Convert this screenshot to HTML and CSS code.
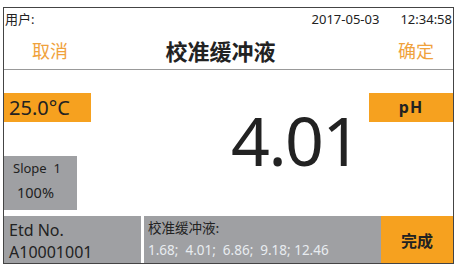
FILE: index.html
```html
<!DOCTYPE html>
<html>
<head>
<meta charset="utf-8">
<link rel="stylesheet" href="styles.css">
</head>
<body>
<div class="frame">
  <div class="status">
    <span class="user">用户:</span>
    <span class="date">2017-05-03</span>
    <span class="time">12:34:58</span>
  </div>
  <div class="header">
    <span class="action">取消</span>
    <span class="title">校准缓冲液</span>
    <span class="action">确定</span>
  </div>
  <div class="main">
    <div class="left">
      <div class="temp">25.0°C</div>
      <div class="slope">
        <div>Slope&nbsp;&nbsp;1</div>
        <div class="pct">100%</div>
      </div>
    </div>
    <div class="center"><span class="value">4.01</span></div>
    <div class="right">
      <div class="unit">pH</div>
    </div>
  </div>
  <div class="bottom">
    <div class="etd">
      <div>Etd No.</div>
      <div>A10001001</div>
    </div>
    <div class="buffers">
      <div class="blabel">校准缓冲液:</div>
      <div class="bvals">1.68;&nbsp; 4.01;&nbsp; 6.86;&nbsp; 9.18; 12.46</div>
    </div>
    <div class="done">完成</div>
  </div>
</div>
</body>
</html>
```
FILE: styles.css
```css
* { box-sizing: border-box; }
html, body { margin: 0; padding: 0; background: #fff; }
body {
  width: 460px;
  height: 272px;
  font-family: "Noto Sans", "Noto Sans CJK SC", sans-serif;
  color: #222;
}
.frame {
  margin: 7px 0 0 3px;
  width: 451px;
  height: 257px;
  border: 1px solid #444;
  display: flex;
  flex-direction: column;
}
.status {
  height: 20px;
  display: flex;
  align-items: center;
  font-size: 13px;
  line-height: 1;
  padding: 2px 1px 0 1px;
}
.user { flex: 1; }
.date { margin-right: 21px; }
.header {
  height: 42px;
  border-bottom: 1px solid #999;
  display: flex;
  align-items: center;
  justify-content: space-between;
  padding: 3px 19px 0 28px;
  font-family: "Noto Sans CJK SC", sans-serif;
}
.action { color: #F0A23C; font-size: 18px; }
.title { font-weight: bold; font-size: 22px; color: #222; margin-right: 25px; }
.main {
  height: 143px;
  display: flex;
}
.left { width: 87px; padding-top: 23px; }
.temp {
  height: 29px;
  background: #F6A11F;
  font-size: 20px;
  line-height: 29px;
  padding-left: 5px;
  color: #222;
}
.slope {
  margin-top: 34px;
  width: 73px;
  height: 54px;
  background: #9FA0A3;
  font-size: 13px;
  padding-top: 5px;
  padding-left: 9px;
  line-height: 15px;
}
.pct { margin-top: 9px; padding-left: 4px; font-size: 14.5px; }
.center {
  flex: 1;
  padding-left: 140px;
  padding-top: 36px;
}
.value {
  font-size: 68px;
  line-height: 1;
  letter-spacing: -1.5px;
  color: #222;
}
.right { width: 84px; padding-top: 23px; }
.unit {
  height: 29px;
  background: #F6A11F;
  font-weight: bold;
  font-size: 16px;
  letter-spacing: 1px;
  line-height: 28px;
  text-align: center;
}
.bottom {
  margin-top: 3px;
  flex: 1;
  display: flex;
}
.etd {
  width: 137px;
  background: #9FA0A3;
  font-size: 16px;
  padding: 3px 0 0 5px;
  line-height: 22px;
}
.buffers {
  width: 237px;
  margin-left: 3px;
  background: #9FA0A3;
  padding: 3px 0 0 4px;
  font-size: 13.5px;
}
.blabel { font-family: "Noto Sans CJK SC", sans-serif; color: #222; line-height: 17px; font-size: 13.5px; }
.bvals { color: #E8ECF0; margin-top: 6px; line-height: 16px; }
.done {
  flex: 1;
  background: #F6A11F;
  font-family: "Noto Sans CJK SC", sans-serif;
  font-weight: bold;
  font-size: 16px;
  display: flex;
  align-items: center;
  justify-content: center;
}
```
